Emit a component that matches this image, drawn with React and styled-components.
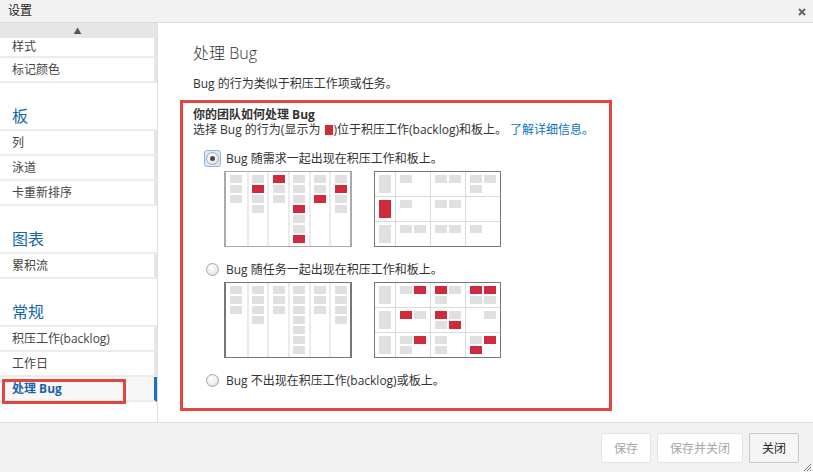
import React from "react";
import styled, { createGlobalStyle } from "styled-components";

const GlobalStyle = createGlobalStyle`
  html, body {
    margin: 0;
    padding: 0;
    background: #ffffff;
  }
  body {
    font-family: "Open Sans", "Noto Sans CJK SC", sans-serif;
    font-size: 12px;
    color: #333333;
  }
`;

const RED = "#d02a3d";
const CARD = "#e0e0e0";

const Dialog = styled.div`
  width: 813px;
  height: 472px;
  display: flex;
  flex-direction: column;
  overflow: hidden;
  position: relative;
`;

const TitleBar = styled.div`
  height: 22px;
  flex: none;
  display: flex;
  align-items: center;
  justify-content: space-between;
  padding: 0 7px 0 8px;
  background: #f2f2f2;
  border-bottom: 1px solid #dcdcdc;
`;

const Title = styled.span`
  font-size: 12px;
  line-height: 22px;
  color: #222;
`;

const CloseIcon = styled.svg`
  width: 8px;
  height: 8px;
  margin-top: 1px;
`;

const Body = styled.div`
  flex: 1;
  min-height: 0;
  display: flex;
`;

const Sidebar = styled.nav`
  width: 157px;
  flex: none;
  border-right: 1px solid #e0e0e0;
  display: flex;
  flex-direction: column;
`;

const ScrollUp = styled.div`
  height: 15px;
  flex: none;
  background: #e6e6e6;
  display: flex;
  align-items: center;
  justify-content: center;
  font-size: 8px;
  color: #555;
  padding-right: 2px;
`;

const NavItem = styled.div`
  position: relative;
  height: ${(p) => (p.$short ? "18px" : "23px")};
  flex: none;
  display: flex;
  align-items: center;
  padding-left: 12px;
  font-size: 12px;
  color: ${(p) => (p.$active ? "#1b63a8" : "#444")};
  font-weight: ${(p) => (p.$active ? 700 : 400)};
  background: ${(p) => (p.$active ? "#f7f7f7" : "#fff")};
  border-bottom: 2px solid #ececec;
  border-right: 3px solid ${(p) => (p.$active ? "#1c6fc4" : "#e6e6e6")};
  line-height: 16px;
`;

const NavHeader = styled.div`
  height: 44px;
  flex: none;
  display: flex;
  align-items: flex-end;
  padding: 0 0 2px 12px;
  font-size: 16px;
  line-height: 22px;
  color: #1468b0;
  border-bottom: 2px solid #ececec;
`;

const Annotation = styled.span`
  position: absolute;
  left: 2px;
  top: 2px;
  width: 118px;
  height: 19px;
  border: 3px solid #e3453f;
  pointer-events: none;
`;

const Main = styled.main`
  flex: 1;
  padding: 18px 0 0 22px;
`;

const Heading = styled.h1`
  margin: 0 0 0 13px;
  font-size: 16px;
  font-weight: 300;
  line-height: 24px;
  color: #333;
`;

const Lead = styled.p`
  margin: 11px 0 8px 13px;
  font-size: 12px;
  line-height: 16px;
  color: #333;
`;

const Section = styled.section`
  width: 416px;
  border: 3px solid #e3453f;
  padding: 4px 0 20px 10px;
`;

const SectionTitle = styled.div`
  font-weight: 700;
  font-size: 12px;
  line-height: 15px;
  color: #333;
`;

const SectionText = styled.div`
  font-size: 12px;
  line-height: 15px;
  color: #333;
  white-space: nowrap;
`;

const Swatch = styled.span`
  display: inline-block;
  width: 8px;
  height: 10px;
  background: ${RED};
  margin: 0 1px;
  vertical-align: -1px;
`;

const Link = styled.a`
  color: #0a72c8;
  text-decoration: none;
  margin-left: 3px;
`;

const Option = styled.label`
  display: flex;
  align-items: center;
  gap: 7px;
  height: 16px;
  margin: ${(p) => (p.$first ? "13px" : "14px")} 0 0 13px;
  font-size: 12px;
  color: #333;
`;

const Radio = styled.span`
  position: relative;
  width: 11px;
  height: 11px;
  flex: none;
  border-radius: 50%;
  border: 1px solid #a6a6a6;
  background: radial-gradient(circle at 40% 35%, #ffffff 0%, #ececec 55%, #d6d6d6 100%);
  display: flex;
  align-items: center;
  justify-content: center;

  &::before {
    content: "";
    display: ${(p) => (p.$checked ? "block" : "none")};
    position: absolute;
    inset: -3px;
    border: 1px solid #8cb6e8;
    border-radius: 3px;
    background: #dbe9f8;
    z-index: -1;
  }

  &::after {
    content: "";
    display: ${(p) => (p.$checked ? "block" : "none")};
    width: 5px;
    height: 5px;
    border-radius: 50%;
    background: #4a4a4a;
  }
`;

const OptionWrap = styled.span`
  position: relative;
  z-index: 0;
  display: flex;
`;

const Diagrams = styled.div`
  display: flex;
  gap: 22px;
  margin: 5px 0 0 31px;
`;

const Backlog = styled.div`
  width: 124px;
  height: 74px;
  border: 1px solid ${(p) => p.$frame};
  border-left-width: 2px;
  border-right-width: 2px;
  display: grid;
  grid-template-columns: repeat(6, 1fr);
`;

const BacklogColumn = styled.div`
  display: flex;
  flex-direction: column;
  align-items: center;
  gap: 2px;
  padding-top: 3px;
  border-left: ${(p) => (p.$first ? "none" : "2px solid #ebebeb")};
`;

const Card = styled.span`
  width: 12px;
  height: 8px;
  flex: none;
  background: ${(p) => (p.$kind === "r" ? RED : p.$kind === "g" ? CARD : "transparent")};
`;

const TallCard = styled(Card)`
  height: 18px;
`;

const Board = styled.div`
  width: 125px;
  height: 74px;
  border: 1px solid #777;
  display: grid;
  grid-template-columns: 21px 35px 35px 34px;
  grid-template-rows: 25px 25px 24px;
`;

const Cell = styled.div`
  display: flex;
  flex-wrap: wrap;
  align-content: flex-start;
  justify-content: ${(p) => (p.$lead ? "center" : "flex-start")};
  gap: 2px;
  padding: 3px 0 0 ${(p) => (p.$lead ? "0" : "4px")};
  border-right: ${(p) => (p.$last ? "none" : "1px solid #dadada")};
  border-bottom: ${(p) => (p.$bottom ? "none" : "1px solid #dadada")};
  width: ${(p) => (p.$lead ? "auto" : "30px")};
`;

const Footer = styled.footer`
  height: 49px;
  flex: none;
  background: #f2f2f2;
  border-top: 1px solid #dcdcdc;
  display: flex;
  align-items: center;
  justify-content: flex-end;
  gap: 6px;
  padding-right: 14px;
`;

const Button = styled.button`
  height: 30px;
  padding: 0 12px;
  min-width: 48px;
  font-family: "Open Sans", "Noto Sans CJK SC", sans-serif;
  font-size: 12px;
  border-radius: 2px;
  border: 1px solid ${(p) => (p.disabled ? "#e4e4e4" : "#c8c8c8")};
  background: ${(p) => (p.disabled ? "#ffffff" : "#f5f5f5")};
  color: ${(p) => (p.disabled ? "#a6a6a6" : "#222")};
`;

const Grip = styled.svg`
  position: absolute;
  right: 1px;
  bottom: 0;
  width: 10px;
  height: 10px;
`;

const backlog1 = ["ggg", "grgg", "rgg", "gggrggr", "ggr", "grgg"];
const backlog2 = ["ggg", "gggg", "ggg", "ggggggg", "ggg", "gggg"];

const board1 = [
  { lead: "g", cells: ["g", "gg", "ggg"] },
  { lead: "r", cells: ["g", "gg", ""] },
  { lead: "g", cells: ["gg", "gg", "g"] },
];

const board2 = [
  { lead: "g", cells: ["gr", "rgg", "rrgg"] },
  { lead: "g", cells: ["rg", "rggr", "-g"] },
  { lead: "g", cells: ["grg", "g-g", "grr"] },
];

function BacklogDiagram({ columns, frame }) {
  return (
    <Backlog $frame={frame}>
      {columns.map((col, i) => (
        <BacklogColumn key={i} $first={i === 0}>
          {col.split("").map((k, j) => (
            <Card key={j} $kind={k} />
          ))}
        </BacklogColumn>
      ))}
    </Backlog>
  );
}

function BoardDiagram({ rows }) {
  return (
    <Board>
      {rows.map((row, r) => (
        <React.Fragment key={r}>
          <Cell $lead $bottom={r === rows.length - 1}>
            <TallCard $kind={row.lead} />
          </Cell>
          {row.cells.map((cell, c) => (
            <Cell key={c} $last={c === 2} $bottom={r === rows.length - 1}>
              {cell.split("").map((k, j) => (
                <Card key={j} $kind={k} />
              ))}
            </Cell>
          ))}
        </React.Fragment>
      ))}
    </Board>
  );
}

export default function App() {
  return (
    <Dialog>
      <GlobalStyle />
      <TitleBar>
        <Title>设置</Title>
        <CloseIcon viewBox="0 0 8 8">
          <path d="M1 1 L7 7 M7 1 L1 7" stroke="#666" strokeWidth="2" />
        </CloseIcon>
      </TitleBar>

      <Body>
        <Sidebar>
          <ScrollUp>▲</ScrollUp>
          <NavItem $short>样式</NavItem>
          <NavItem>标记颜色</NavItem>
          <NavHeader>板</NavHeader>
          <NavItem>列</NavItem>
          <NavItem>泳道</NavItem>
          <NavItem>卡重新排序</NavItem>
          <NavHeader>图表</NavHeader>
          <NavItem>累积流</NavItem>
          <NavHeader>常规</NavHeader>
          <NavItem>积压工作(backlog)</NavItem>
          <NavItem>工作日</NavItem>
          <NavItem $active>
            处理 Bug
            <Annotation />
          </NavItem>
        </Sidebar>

        <Main>
          <Heading>处理 Bug</Heading>
          <Lead>Bug 的行为类似于积压工作项或任务。</Lead>
          <Section>
            <SectionTitle>你的团队如何处理 Bug</SectionTitle>
            <SectionText>
              选择 Bug 的行为(显示为 <Swatch />)位于积压工作(backlog)和板上。
              <Link href="#">了解详细信息。</Link>
            </SectionText>

            <Option $first>
              <OptionWrap>
                <Radio $checked />
              </OptionWrap>
              Bug 随需求一起出现在积压工作和板上。
            </Option>
            <Diagrams>
              <BacklogDiagram columns={backlog1} frame="#aaaaaa" />
              <BoardDiagram rows={board1} />
            </Diagrams>

            <Option>
              <OptionWrap>
                <Radio />
              </OptionWrap>
              Bug 随任务一起出现在积压工作和板上。
            </Option>
            <Diagrams>
              <BacklogDiagram columns={backlog2} frame="#777777" />
              <BoardDiagram rows={board2} />
            </Diagrams>

            <Option>
              <OptionWrap>
                <Radio />
              </OptionWrap>
              Bug 不出现在积压工作(backlog)或板上。
            </Option>
          </Section>
        </Main>
      </Body>

      <Footer>
        <Button disabled>保存</Button>
        <Button disabled>保存并关闭</Button>
        <Button>关闭</Button>
      </Footer>
      <Grip viewBox="0 0 10 10">
        <path d="M9 2 L2 9 M9 5 L5 9 M9 8 L8 9" stroke="#777" strokeWidth="1" />
      </Grip>
    </Dialog>
  );
}
